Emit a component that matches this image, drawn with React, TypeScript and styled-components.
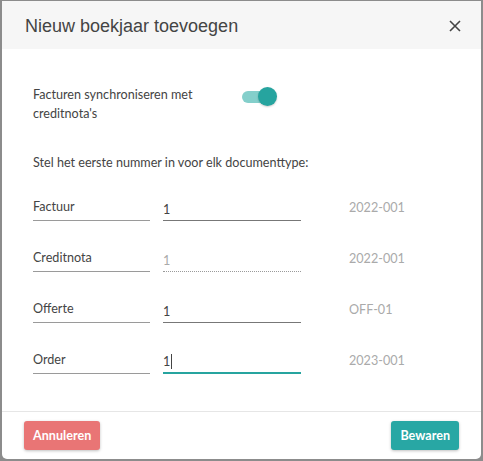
import styled, { createGlobalStyle } from "styled-components";

const GlobalStyle = createGlobalStyle`
  html, body {
    margin: 0;
    padding: 0;
    background: #8c8c8c;
  }
  * {
    box-sizing: border-box;
  }
`;

interface DocRow {
  key: string;
  label: string;
  value: string;
  hint: string;
  disabled?: boolean;
  focused?: boolean;
}

const rows: DocRow[] = [
  { key: "factuur", label: "Factuur", value: "1", hint: "2022-001" },
  { key: "creditnota", label: "Creditnota", value: "1", hint: "2022-001", disabled: true },
  { key: "offerte", label: "Offerte", value: "1", hint: "OFF-01" },
  { key: "order", label: "Order", value: "1", hint: "2023-001", focused: true },
];

export default function App(): JSX.Element {
  return (
    <>
      <GlobalStyle />
      <Page>
        <Dialog>
          <Header>
            <Title>Nieuw boekjaar toevoegen</Title>
            <CloseButton type="button" aria-label="Sluiten">
              <svg width="12" height="12" viewBox="0 0 12 12">
                <path d="M1 1L11 11M11 1L1 11" stroke="#444" strokeWidth="1.6" />
              </svg>
            </CloseButton>
          </Header>
          <Body>
            <SwitchRow>
              <SwitchLabel>Facturen synchroniseren met creditnota's</SwitchLabel>
              <Switch>
                <Track />
                <Knob />
              </Switch>
            </SwitchRow>
            <Intro>Stel het eerste nummer in voor elk documenttype:</Intro>
            <Rows>
              {rows.map((r) => (
                <Row key={r.key}>
                  <Field>{r.label}</Field>
                  <NumberField $disabled={r.disabled} $focused={r.focused}>
                    {r.value}
                    {r.focused && <Caret />}
                  </NumberField>
                  <Hint>{r.hint}</Hint>
                </Row>
              ))}
            </Rows>
          </Body>
          <Footer>
            <Button $variant="danger">Annuleren</Button>
            <Button $variant="primary">Bewaren</Button>
          </Footer>
        </Dialog>
      </Page>
    </>
  );
}

const Page = styled.div`
  width: 483px;
  height: 461px;
  padding: 1px 2px 2px 2px;
`;

const Dialog = styled.div`
  width: 479px;
  height: 458px;
  background: #fff;
  border-radius: 0 0 5px 5px;
  display: flex;
  flex-direction: column;
  font-family: Lato, "Open Sans", sans-serif;
  color: #444;
`;

const Header = styled.div`
  height: 48px;
  background: #f6f6f6;
  display: flex;
  align-items: center;
  justify-content: space-between;
  padding: 0 20px 0 23px;
`;

const Title = styled.h2`
  margin: 0;
  font-family: "Liberation Sans", Arial, sans-serif;
  font-weight: 400;
  font-size: 18px;
  color: #444;
  padding-top: 2px;
`;

const CloseButton = styled.button`
  border: 0;
  background: none;
  padding: 0;
  display: flex;
  cursor: pointer;
  margin-top: 1px;
`;

const Body = styled.div`
  flex: 1;
  padding: 36px 0 0 31px;
  display: flex;
  flex-direction: column;
  font-size: 12.6px;
`;

const SwitchRow = styled.div`
  display: flex;
  align-items: flex-start;
  gap: 45px;
`;

const SwitchLabel = styled.div`
  width: 163px;
  line-height: 19px;
`;

const Switch = styled.div`
  position: relative;
  width: 36px;
  height: 20px;
  margin-top: 2px;
`;

const Track = styled.div`
  position: absolute;
  left: 1px;
  top: 4px;
  width: 30px;
  height: 12px;
  border-radius: 6px;
  background: #84cfcb;
`;

const Knob = styled.div`
  position: absolute;
  right: 0;
  top: 0;
  width: 19px;
  height: 19px;
  border-radius: 50%;
  background: #26a49f;
  box-shadow: 0 1px 2px rgba(0, 0, 0, 0.2);
`;

const Intro = styled.p`
  margin: 30px 0 0;
  line-height: 19px;
`;

const Rows = styled.div`
  display: flex;
  flex-direction: column;
  gap: 27px;
  margin-top: 25px;
`;

const Row = styled.div`
  display: flex;
  align-items: flex-end;
  height: 24px;
`;

const Field = styled.div`
  width: 117px;
  height: 24px;
  border-bottom: 1px solid #9a9a9a;
  line-height: 19px;
`;

const NumberField = styled.div<{ $disabled?: boolean; $focused?: boolean }>`
  position: relative;
  width: 138px;
  margin-left: 13px;
  height: ${({ $focused }) => ($focused ? "25px" : "24px")};
  line-height: 19px;
  padding-top: 3px;
  color: ${({ $disabled }) => ($disabled ? "#aaa" : "#444")};
  border-bottom: ${({ $disabled, $focused }) =>
    $focused ? "2px solid #26a49f" : $disabled ? "1px dotted #9a9a9a" : "1px solid #777"};
`;

const Caret = styled.span`
  display: inline-block;
  width: 1px;
  height: 15px;
  background: #444;
  vertical-align: -3px;
  margin-left: 1px;
`;

const Hint = styled.div`
  margin-left: 48px;
  line-height: 19px;
  color: #aaa;
  align-self: flex-start;
  margin-top: 1px;
`;

const Footer = styled.div`
  height: 48px;
  border-top: 1px solid #e6e6e6;
  display: flex;
  align-items: center;
  justify-content: space-between;
  padding: 0 22px 0 22px;
`;

const Button = styled.button<{ $variant: "danger" | "primary" }>`
  height: 29px;
  border: 0;
  border-radius: 3px;
  padding: 0 9px;
  font-family: Lato, "Open Sans", sans-serif;
  font-weight: 700;
  font-size: 12.6px;
  color: #fff;
  background: ${({ $variant }) => ($variant === "danger" ? "#e97575" : "#28a7a4")};
  box-shadow: 0 1px 3px rgba(0, 0, 0, 0.25);
  cursor: pointer;
`;
